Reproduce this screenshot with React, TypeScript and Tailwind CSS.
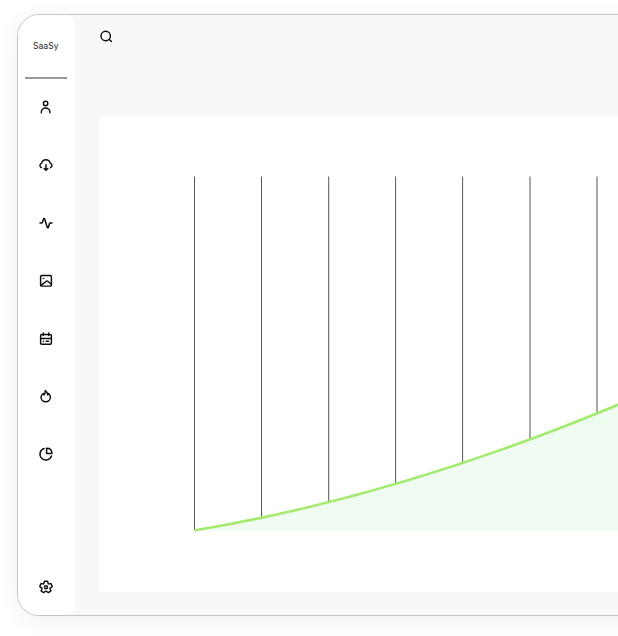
import type { ReactNode } from "react";

function Icon({ children }: { children: ReactNode }) {
	return (
		<svg
			className="w-4 h-4"
			viewBox="0 0 16 16"
			fill="none"
			stroke="#0d0d0d"
			strokeWidth="1.45"
			strokeLinecap="round"
			strokeLinejoin="round"
		>
			{children}
		</svg>
	);
}

const items: { name: string; icon: ReactNode }[] = [
	{
		name: "Account",
		icon: (
			<>
				<circle cx="7.6" cy="4.5" r="2.2" />
				<path d="M3.3 13.7v-.4a4.3 4.3 0 0 1 8.6 0v.4" />
			</>
		),
	},
	{
		name: "Downloads",
		icon: (
			<>
				<path d="M3.3 10.7A2.5 2.5 0 0 1 3.7 6.1a4.4 4.4 0 0 1 8.5 0 2.5 2.5 0 0 1 .4 4.6" />
				<path d="M8 7.6v5.4M6.1 11.5 8 13.3l1.9-1.8" />
			</>
		),
	},
	{
		name: "Activity",
		icon: (
			<path d="M2 8h1.5c.7 0 .9-.5 1.1-1.1L5.5 4c.2-.8 1-.8 1.200 0l2.500 8.200c.2.8 1 .8 1.200 0l1-3.500c.2-.5.5-.7 1-.7H14" />
		),
	},
	{
		name: "Images",
		icon: (
			<>
				<rect x="2.6" y="2.5" width="10.8" height="10.6" rx="1.2" />
				<circle cx="5.5" cy="5.5" r=".8" fill="#0d0d0d" stroke="none" />
				<path d="m3 12.400 5.500-4.200c.5-.4.9-.4 1.300 0l3.300 2.800" />
			</>
		),
	},
	{
		name: "Calendar",
		icon: (
			<>
				<rect x="2.6" y="3.5" width="10.8" height="9.8" rx="1.2" />
				<path d="M5.300 2v2.400M10.700 2v2.400M2.900 7.400h10.200" />
				<path d="M5.400 10.200h.1M8.300 10.200h2.300" />
			</>
		),
	},
	{
		name: "Trending",
		icon: (
			<path d="M7.200 2.600c.3 2-.3 3.200-1.100 4.300-.4-.3-.7-.8-.8-1.400C3.900 6.500 3 7.900 3 9.300a4.700 4.500 0 0 0 9.400 0c0-1.500-.6-2.700-1.800-3.800-.1.700-.4 1.200-.9 1.500C9.600 5 8.800 3.500 7.200 2.600Z" />
		),
	},
	{
		name: "Reports",
		icon: (
			<>
				<path d="M6.100 2.500a5.900 5.900 0 1 0 7.400 7.500" />
				<path d="M8.600 2.300v5.200h5.300c0-3.200-2.100-5.200-5.300-5.200Z" />
			</>
		),
	},
];

const gridLines = [
	{ x: 95.5, end: 414 },
	{ x: 162.5, end: 401.5 },
	{ x: 229.7, end: 386.5 },
	{ x: 296.6, end: 368.5 },
	{ x: 363.6, end: 347.5 },
	{ x: 431, end: 323.5 },
	{ x: 498, end: 297.5 },
];

function Sidebar() {
	return (
		<aside className="flex flex-col items-center w-[57px] pr-[1.5px] shrink-0 bg-white rounded-r-[9px]">
			<span className="mt-[25px] text-[8.6px] leading-3 text-[#222]">SaaSy</span>
			<div className="mt-[25px] w-[42px] h-[2px] bg-[#999]" />
			<nav className="mt-5 flex flex-col gap-[41.9px]">
				{items.map((item) => (
					<a key={item.name} aria-label={item.name}>
						<Icon>{item.icon}</Icon>
					</a>
				))}
			</nav>
			<a aria-label="Settings" className="mt-auto mb-5">
				<Icon>
					<path d="M6.5 2.2h3l.8 2.700 2.900-.2 1 2.900-2.300 1.700 1 2.500-2.500 1.800L8 12l-2.400 1.600-2.500-1.800 1-2.500-2.300-1.700 1-2.900 2.900.2Z" />
					<circle cx="8" cy="8.300" r="1.500" />
				</Icon>
			</a>
		</aside>
	);
}

function GrowthChart() {
	return (
		<svg className="block w-[519px] h-[476px]" viewBox="0 0 519 476" fill="none">
			<path d="M95.5 414.300Q300 380.300 519 288.800V415H95.500Z" fill="#effaf0" />
			{gridLines.map((line) => (
				<path key={line.x} d={`M${line.x} 60.5V${line.end}`} stroke="#555555" />
			))}
			<path d="M95 414.500Q300 380.300 520 288.300" stroke="#a4ea70" strokeWidth="2.6" />
		</svg>
	);
}

export default function App() {
	return (
		<div className="h-[636px] w-full overflow-hidden bg-white pt-[14px] pl-[17px] font-['Inter',sans-serif]">
			<div className="flex w-[660px] h-[602px] overflow-hidden rounded-[22px] border border-[#c5c5c5] bg-[#f8f8f8] shadow-[0_4px_24px_rgba(0,0,0,0.06)]">
				<Sidebar />
				<main className="ml-6 flex-1 min-w-0">
					<div className="pt-[14px] h-[101px]">
						<Icon>
							<circle cx="6.700" cy="7" r="4.700" />
							<path d="m10.300 10.500 2.100 2.100" />
						</Icon>
					</div>
					<section className="h-[476px] w-[540px] rounded-[5px] bg-white">
						<GrowthChart />
					</section>
				</main>
			</div>
		</div>
	);
}
